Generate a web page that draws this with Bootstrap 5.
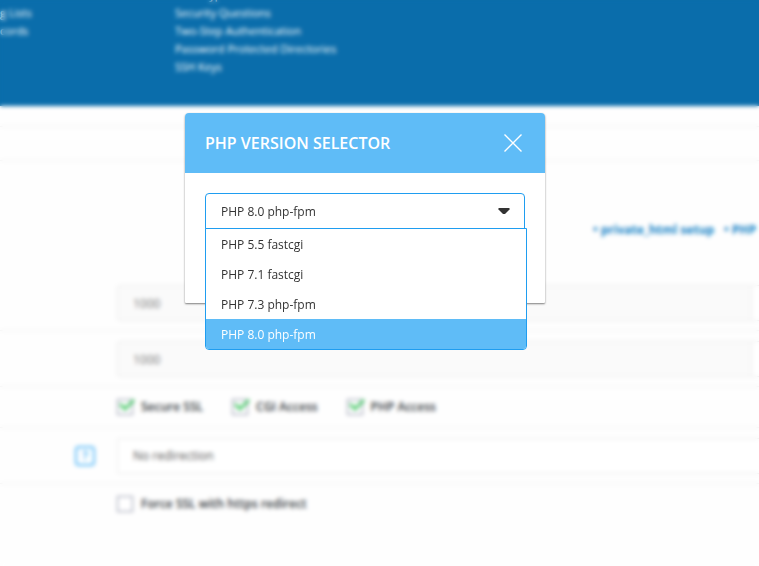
<!DOCTYPE html>
<html lang="en">
<head>
<meta charset="utf-8">
<meta name="viewport" content="width=device-width, initial-scale=1">
<title>PHP Version Selector</title>
<link href="https://cdn.jsdelivr.net/npm/bootstrap@5.3.0/dist/css/bootstrap.min.css" rel="stylesheet">
<style>
  body { font-family: "Open Sans", "Noto Sans", sans-serif; font-size: 12px; line-height: 18px; color: #333; background: #fefefe; }
  .page-top { background: #0a6dab; height: 106px; }
  .page-top a { color: #fff; font-size: 11px; text-decoration: none; line-height: 18px; display: block; white-space: nowrap; }
  .menu-side { width: 175px; }
  .menu-list { margin-top: -14px; }
  .crumbs { height: 35px; margin-top: 20px; border-top: 1px solid #f0f0f0; border-bottom: 1px solid #f0f0f0; }
  .page-actions { height: 114px; padding: 60px 3px 0 0; gap: 10px; }
  .page-actions a { color: #1583c7; font-weight: 700; text-decoration: none; white-space: nowrap; }
  .form-line { border-bottom: 1px solid #f0f0f0; padding: 10px 0; }
  .form-field { padding-bottom: 9px; }
  .line-side { width: 117px; padding-right: 22px; }
  .field { height: 36px; border: 1px solid #ebebeb; border-radius: 3px; font-size: 12px; padding: 0 15px; color: #555; background: #fff; box-shadow: none; }
  .field:disabled { background: #fafafa; color: #777; border-radius: 3px 0 0 3px; }
  .field-end { width: 7px; border: 1px solid #ebebeb; border-width: 1px 0; background: #fff; }
  .field-select { border-right: 0; appearance: none; border-radius: 3px 0 0 3px; }
  .checks { gap: 29px; }
  .checks label { gap: 8px; font-weight: 600; color: #33383d; height: 20px; white-space: nowrap; }
  .tick { appearance: none; width: 16px; height: 16px; border: 1px solid #8d93a8; background: #fff; margin: 0; display: block; }
  .tick-box { position: relative; }
  .tick-box svg { position: absolute; left: 1px; top: -1px; pointer-events: none; }
  .help { width: 20px; height: 20px; border: 2px solid #5fbcf7; border-radius: 4px; background: #fff; color: #5fbcf7; font-size: 12px; font-weight: 700; line-height: 14px; padding: 0; }
  .veil { position: fixed; inset: 0; backdrop-filter: blur(2px); padding: 113px 29px 0 0; }
  .dialog-box { width: 360px; background: #fff; border-radius: 4px 4px 1px 1px; box-shadow: 0 1px 2px rgba(0,0,0,.5); }
  .dialog-head { height: 60px; padding: 0 20px; background: #5fbcf7; border-radius: 4px 4px 0 0; }
  .dialog-head h1 { font-size: 16px; font-weight: 600; color: #fff; line-height: 24px; }
  .close-x { border: 0; background: none; padding: 0 2px; line-height: 0; }
  .dialog-content { padding: 20px 20px 74px; }
  .picker { position: relative; }
  .picker select { appearance: none; width: 100%; height: 36px; border: 1px solid #1f9df0; border-radius: 4px 4px 0 0; background: #fff; font-size: 12px; color: #333; padding: 2px 15px 0; display: block; outline: 0; }
  .picker svg { position: absolute; right: 15px; top: 15px; pointer-events: none; }
  .picker .dropdown-menu { top: 35px; left: 0; width: 322px; border: 1px solid #1f9df0; border-radius: 0 0 4px 4px; padding: 0; margin: 0; font-size: 12px; overflow: hidden; }
  .picker .dropdown-item { height: 30px; padding: 2px 15px 0; color: #333; line-height: 28px; }
  .picker .dropdown-item.active { background: #5fbcf7; color: #fff; }
</style>
<script src="https://cdn.jsdelivr.net/npm/bootstrap@5.3.0/dist/js/bootstrap.bundle.min.js"></script>
</head>
<body class="overflow-hidden">
<header class="page-top d-flex overflow-hidden">
  <nav class="menu-side menu-list" aria-label="Mail">
    <a href="#">wards</a>
    <a href="#">g Lists</a>
    <a href="#">cords</a>
  </nav>
  <nav class="menu-list" aria-label="Security">
    <a href="#">Perl Crypt</a>
    <a href="#">Security Questions</a>
    <a href="#">Two-Step Authentication</a>
    <a href="#">Password Protected Directories</a>
    <a href="#">SSH Keys</a>
  </nav>
</header>
<main>
  <div class="crumbs"></div>
  <div class="page-actions d-flex justify-content-end">
    <a href="#">• private_html setup</a>
    <a href="#">• PHP</a>
  </div>
  <form>
    <div class="form-line form-field d-flex">
      <div class="line-side flex-shrink-0"></div>
      <input class="form-control field" aria-label="Bandwidth" value="1000" disabled>
      <div class="field-end flex-shrink-0"></div>
    </div>
    <div class="form-line form-field d-flex">
      <div class="line-side flex-shrink-0"></div>
      <input class="form-control field" aria-label="Disk space" value="1000" disabled>
      <div class="field-end flex-shrink-0"></div>
    </div>
    <div class="form-line d-flex">
      <div class="line-side flex-shrink-0"></div>
      <div class="checks d-flex">
        <label class="d-flex align-items-center"><span class="tick-box"><input type="checkbox" class="tick" checked><svg width="18" height="16" viewBox="0 0 18 16" fill="none" stroke="#3cc35d" stroke-width="2.5"><path d="M2 6l5 5 9-9"/></svg></span>Secure SSL</label>
        <label class="d-flex align-items-center"><span class="tick-box"><input type="checkbox" class="tick" checked><svg width="18" height="16" viewBox="0 0 18 16" fill="none" stroke="#3cc35d" stroke-width="2.5"><path d="M2 6l5 5 9-9"/></svg></span>CGI Access</label>
        <label class="d-flex align-items-center"><span class="tick-box"><input type="checkbox" class="tick" checked><svg width="18" height="16" viewBox="0 0 18 16" fill="none" stroke="#3cc35d" stroke-width="2.5"><path d="M2 6l5 5 9-9"/></svg></span>PHP Access</label>
      </div>
    </div>
    <div class="form-line form-field d-flex">
      <div class="line-side flex-shrink-0 d-flex justify-content-end align-items-center"><button type="button" class="help">?</button></div>
      <select class="form-control field field-select" aria-label="Redirection"><option>No redirection</option></select>
    </div>
    <div class="form-line d-flex border-0">
      <div class="line-side flex-shrink-0"></div>
      <div class="checks d-flex">
        <label class="d-flex align-items-center"><input type="checkbox" class="tick">Force SSL with https redirect</label>
      </div>
    </div>
  </form>
</main>
<div class="veil d-flex justify-content-center align-items-start">
  <section class="dialog-box" role="dialog" aria-labelledby="dialog-title">
    <div class="dialog-head d-flex align-items-center justify-content-between">
      <h1 class="m-0" id="dialog-title">PHP VERSION SELECTOR</h1>
      <button type="button" class="close-x" aria-label="Close"><svg width="20" height="20" viewBox="0 0 20 20" stroke="#fff" stroke-width="1.4"><path d="M1.5 1.5l17 17M18.5 1.5l-17 17"/></svg></button>
    </div>
    <div class="dialog-content">
      <div class="picker">
        <select aria-label="PHP version"><option>PHP 8.0 php-fpm</option></select>
        <svg width="12" height="6" viewBox="0 0 12 6"><path d="M1 0h10l1 1-5 5H5L0 1z" fill="#333"/></svg>
        <ul class="dropdown-menu show">
          <li><button type="button" class="dropdown-item">PHP 5.5 fastcgi</button></li>
          <li><button type="button" class="dropdown-item">PHP 7.1 fastcgi</button></li>
          <li><button type="button" class="dropdown-item">PHP 7.3 php-fpm</button></li>
          <li><button type="button" class="dropdown-item active">PHP 8.0 php-fpm</button></li>
        </ul>
      </div>
    </div>
  </section>
</div>
</body>
</html>
